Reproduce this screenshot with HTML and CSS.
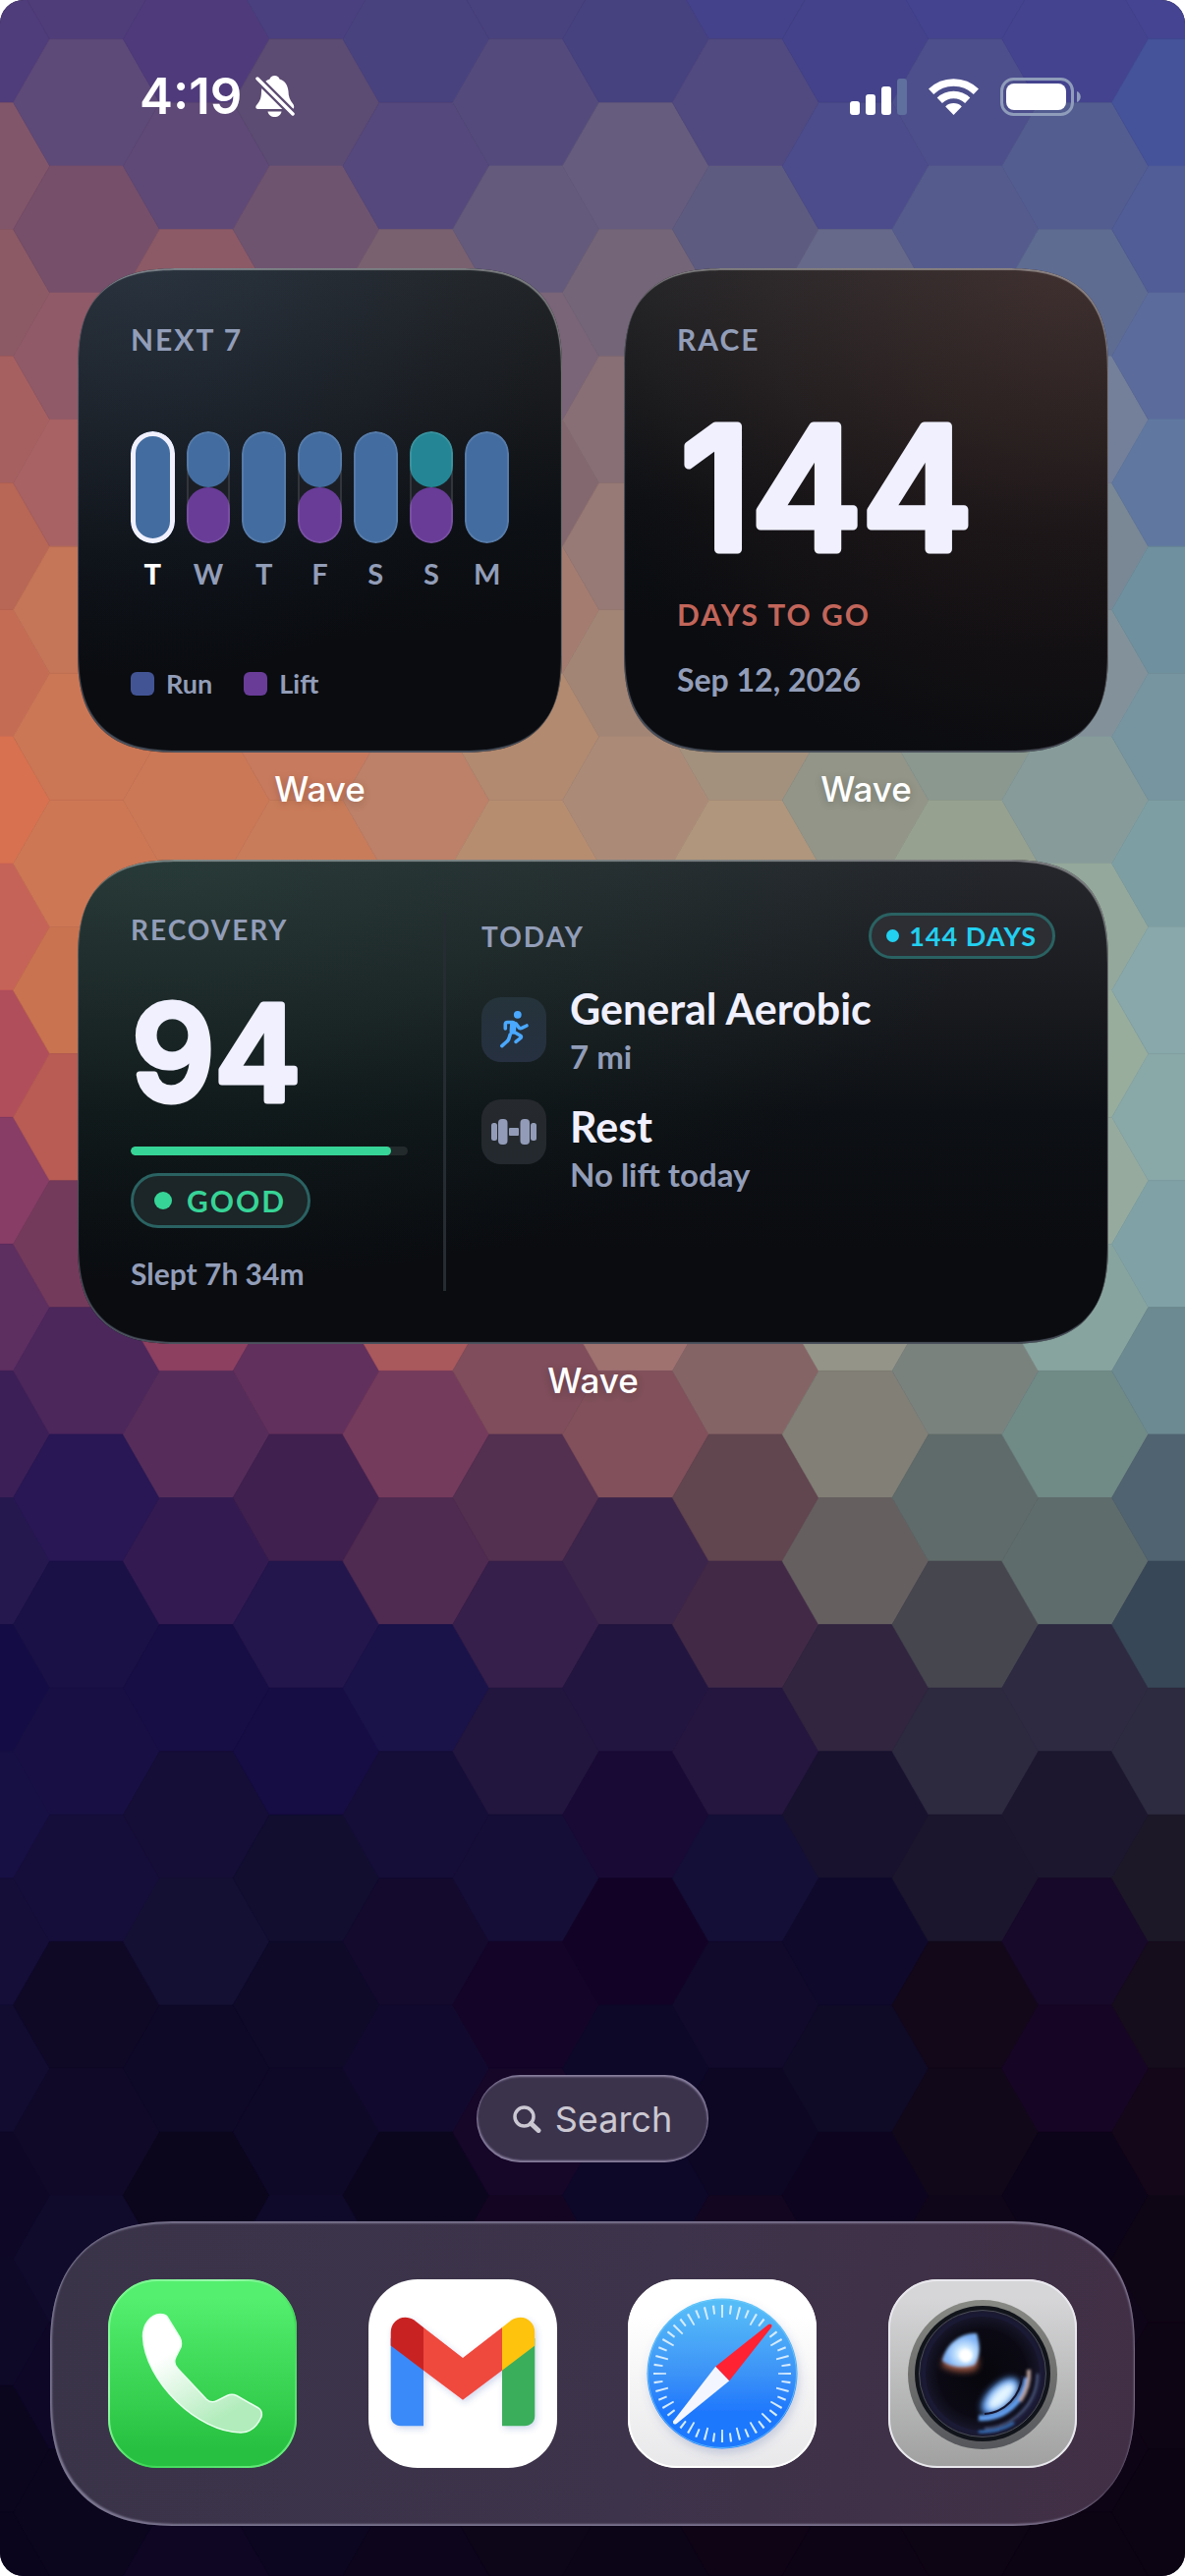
FILE: index.html
```html
<!DOCTYPE html>
<html lang="en">
<head>
<meta charset="utf-8">
<meta name="viewport" content="width=device-width, initial-scale=1">
<title>Home Screen</title>
<link rel="stylesheet" href="styles.css">
</head>
<body>
<main class="screen">
  <svg class="wallpaper" id="wallpaper" viewBox="0 0 1206 2622" preserveAspectRatio="xMidYMid slice" aria-hidden="true"></svg>

  <header class="status">
    <div class="status-side">
      <time class="clock">4:19</time>
      <svg class="bell" viewBox="0 0 40 44" role="img" aria-label="Silent mode">
        <defs>
          <mask id="bell-cut">
            <rect width="40" height="44" fill="#fff"/>
            <path d="M0 2 L40 42" stroke="#000" stroke-width="8"/>
          </mask>
        </defs>
        <g fill="#fff" mask="url(#bell-cut)">
          <path d="M19.5 1C22 1 24 2.500 24.500 4.500C30 6 33 11 33.500 17C33.500 22 35 26 38 29.500C40 32 39.500 35 37 35H2.500C0 35-.5 32.500 1.500 30.500C5 26.500 6 23 6 17C6.500 11 9 6 14.500 4.500C15 2.500 17 1 19.500 1Z"/>
        </g>
        <path fill="#fff" d="M12.500 37.500H26.500C26 41 23 43 19.500 43S13 41 12.500 37.500Z"/>
        <path d="M2 4L38 40" stroke="#fff" stroke-width="3.500" stroke-linecap="round"/>
      </svg>
    </div>
    <div class="status-side status-right">
      <svg class="signal" viewBox="0 0 58 37" role="img" aria-label="Signal: three of four bars" fill="#fff">
        <rect x="0" y="23" width="10" height="14" rx="3"/>
        <rect x="16" y="16" width="10" height="21" rx="3"/>
        <rect x="32" y="8" width="10" height="29" rx="3"/>
        <rect x="48" y="0" width="10" height="37" rx="3" fill="#5f6f9e"/>
      </svg>
      <svg class="wifi" viewBox="0 0 51 37" role="img" aria-label="Wi-Fi">
        <g fill="none" stroke="#fff" stroke-width="7.500">
          <path d="M2.600 13.300A33 33 0 0 1 48.400 13.300"/>
          <path d="M11.300 22.300A20.500 20.500 0 0 1 39.700 22.300"/>
        </g>
        <path fill="#fff" d="M25.500 37L17.200 28.400A12 12 0 0 1 33.800 28.400Z"/>
      </svg>
      <svg class="battery" viewBox="0 0 82 39" role="img" aria-label="Battery full">
        <rect x="1.500" y="1.500" width="72" height="36" rx="12" fill="none" stroke="#8f9cba" stroke-width="3"/>
        <rect x="6" y="6" width="61" height="27" rx="8" fill="#fff"/>
        <path d="M78 14C83 15.500 83 23.500 78 25Z" fill="#8f9cba"/>
      </svg>
    </div>
  </header>

  <div class="widgets">
    <figure class="widget">
      <section class="card card-week">
        <h2 class="label">NEXT 7</h2>
        <ol class="days">
          <li class="day today"><span class="pill"><i class="run"></i></span>T</li>
          <li class="day"><span class="pill"><i class="run"></i><i class="lift"></i></span>W</li>
          <li class="day"><span class="pill"><i class="run"></i></span>T</li>
          <li class="day"><span class="pill"><i class="run"></i><i class="lift"></i></span>F</li>
          <li class="day"><span class="pill"><i class="run"></i></span>S</li>
          <li class="day"><span class="pill"><i class="long"></i><i class="lift"></i></span>S</li>
          <li class="day"><span class="pill"><i class="run"></i></span>M</li>
        </ol>
        <ul class="legend">
          <li><i class="key key-run"></i>Run</li>
          <li><i class="key key-lift"></i>Lift</li>
        </ul>
      </section>
      <figcaption class="caption">Wave</figcaption>
    </figure>

    <figure class="widget">
      <section class="card card-race">
        <h2 class="label">RACE</h2>
        <svg class="race-number" viewBox="0 0 385 220"><text class="numeral numeral-xl" x="4" y="172">144</text></svg>
        <p class="race-unit">DAYS TO GO</p>
        <p class="race-date">Sep 12, 2026</p>
      </section>
      <figcaption class="caption">Wave</figcaption>
    </figure>

    <figure class="widget widget-wide">
      <section class="card card-today">
        <div class="recovery">
          <h2 class="label label-small">RECOVERY</h2>
          <svg class="score" viewBox="0 0 282 170"><text class="numeral numeral-l" x="1" y="133">94</text></svg>
          <div class="meter"><span style="width:94%"></span></div>
          <p class="badge badge-good"><i class="dot"></i>GOOD</p>
          <p class="slept">Slept 7h 34m</p>
        </div>
        <div class="plan">
          <div class="plan-head">
            <h2 class="label label-small">TODAY</h2>
            <p class="badge badge-days"><i class="dot"></i>144 DAYS</p>
          </div>
          <div class="item item-run">
            <svg class="tile" viewBox="0 0 66 66" aria-hidden="true">
              <circle cx="36.800" cy="17.800" r="3.900" fill="#4aa8ff"/>
              <g fill="none" stroke="#4aa8ff" stroke-linecap="round" stroke-linejoin="round" stroke-width="3.600">
                <path d="M24.300 32V27.500Q24.300 25.500 26.500 25.500H32"/>
                <path d="M35 27L38.500 31.300Q39.500 32 41 31.400L46 29"/>
                <path d="M32.500 35L39.800 39.300Q40.800 40.300 40 41.300L35 45.300"/>
                <path d="M29.200 38L27.800 42.500Q27.200 44 26 45L20.800 49.600"/>
                <path d="M32.300 27.500L31.800 34.500" stroke-width="6.500"/>
              </g>
            </svg>
            <div><h3 class="title">General Aerobic</h3><p class="sub">7 mi</p></div>
          </div>
          <div class="item item-lift">
            <svg class="tile" viewBox="0 0 66 66" aria-hidden="true" fill="#929cb8">
              <rect x="10" y="24" width="6" height="18" rx="2.500"/>
              <rect x="17" y="20" width="9.500" height="26" rx="4"/>
              <rect x="28" y="29" width="10" height="8" rx="1"/>
              <rect x="39.500" y="20" width="9.500" height="26" rx="4"/>
              <rect x="50" y="24" width="6" height="18" rx="2.500"/>
            </svg>
            <div><h3 class="title">Rest</h3><p class="sub">No lift today</p></div>
          </div>
        </div>
      </section>
      <figcaption class="caption">Wave</figcaption>
    </figure>
  </div>

  <button class="search" type="button">
    <svg class="glass" viewBox="0 0 29 28" aria-hidden="true" fill="none" stroke="#cbc8d2" stroke-linecap="round">
      <circle cx="11.500" cy="11.500" r="9.500" stroke-width="3.500"/>
      <path d="M18.500 18.500L26 25.500" stroke-width="5"/>
    </svg>
    Search
  </button>

  <nav class="dock" aria-label="Dock">
    <a class="app" href="#phone" aria-label="Phone">
      <svg viewBox="0 0 192 192">
        <defs>
          <linearGradient id="ph-bg" x2="0" y2="1"><stop offset=".1" stop-color="#54ef6e"/><stop offset=".9" stop-color="#28c040"/></linearGradient>
          <linearGradient id="ph-edge" x2="1" y2="1"><stop offset="0" stop-color="#6df585"/><stop offset=".3" stop-color="#9bffae"/><stop offset=".6" stop-color="#3ed857"/><stop offset="1" stop-color="#6ff085"/></linearGradient>
          <linearGradient id="ph-fg" x1=".2" x2=".8" y2="1"><stop offset=".25" stop-color="#fff"/><stop offset=".85" stop-color="#b2ecbc"/></linearGradient>
        </defs>
        <rect width="192" height="192" rx="50" fill="url(#ph-bg)"/>
        <rect x="1" y="1" width="190" height="190" rx="49" fill="none" stroke="url(#ph-edge)" stroke-width="2"/>
        <path fill="url(#ph-fg)" stroke="#eafff0" stroke-width="1.500" d="M53 35.500C43 36 35.500 46 35.500 58C37 104 92 156 135 156C146 156 152 149 156 140C157 136 156 133 153 131L131 118.500C127 116.500 124 117 121 118.500L111 123.500C107 125.500 103 125 100 122L71 91C67 87 67 83 69 79L74 69C75 65 74.500 62 73 59L60 38C58 35.500 56 35.500 53 35.500Z"/>
      </svg>
    </a>
    <a class="app" href="#gmail" aria-label="Gmail">
      <svg viewBox="0 0 192 192">
        <defs><filter id="gm-sh" x="-20%" y="-20%" width="150%" height="150%"><feDropShadow dx="2" dy="3" stdDeviation="3" flood-color="#3355aa" flood-opacity=".22"/></filter></defs>
        <rect width="192" height="192" rx="50" fill="#fff"/>
        <g filter="url(#gm-sh)">
          <path fill="#3b8af9" d="M22.700 60V139C22.700 145 27 149.300 33 149.300H56V88Z"/>
          <path fill="#3aae5b" d="M169.300 60V139C169.300 145 165 149.300 159 149.300H136V88Z"/>
          <path fill="#ef4a3e" d="M56 49L96 80L136 49V92.700L96 122.700L56 92.700Z"/>
          <path fill="#c92420" d="M56 92.700L22.700 67.500V54C22.700 41 36 34.500 46.500 41.500L56 49Z"/>
          <path fill="#fdc310" d="M136 92.700L169.300 67.500V54C169.300 41 156 34.500 145.500 41.500L136 49Z"/>
        </g>
      </svg>
    </a>
    <a class="app" href="#safari" aria-label="Safari">
      <svg viewBox="0 0 192 192">
        <defs>
          <linearGradient id="sf-bg" x2="0" y2="1"><stop offset=".2" stop-color="#fff"/><stop offset="1" stop-color="#e8e8ea"/></linearGradient>
          <linearGradient id="sf-dial" x2="0" y2="1"><stop offset=".05" stop-color="#57bcf8"/><stop offset=".5" stop-color="#3c93f7"/><stop offset=".75" stop-color="#1f78fd"/></linearGradient>
          <filter id="sf-sh" x="-20%" y="-20%" width="140%" height="150%"><feDropShadow dx="2" dy="5" stdDeviation="5" flood-color="#5060a0" flood-opacity=".25"/></filter>
        </defs>
        <rect width="192" height="192" rx="50" fill="url(#sf-bg)"/>
        <rect x="1" y="1" width="190" height="190" rx="49" fill="none" stroke="#fff" stroke-width="2"/>
        <circle cx="96" cy="96" r="76.500" fill="url(#sf-dial)" filter="url(#sf-sh)"/>
        <circle cx="96" cy="96" r="75.500" fill="none" stroke="#6fd0fb" stroke-opacity=".7"/>
        <g fill="none" stroke="#d6ebff">
          <circle cx="96" cy="96" r="63.500" stroke-width="13" pathLength="240" stroke-dasharray="1.200 8.800" stroke-dashoffset=".6"/>
          <circle cx="96" cy="96" r="65.500" stroke-width="9" pathLength="240" stroke-dasharray="1.200 8.800" stroke-dashoffset="5.600"/>
        </g>
        <path fill="#f4f6ff" d="M89.300 88.700L103.300 103.300L49.500 147C47 148.500 45 146.500 46.500 144Z"/>
        <path fill="#ff2233" d="M89.300 88.700L103.300 103.300L146 49C147.500 46.500 145.500 44.500 143 46Z"/>
      </svg>
    </a>
    <a class="app" href="#camera" aria-label="Camera">
      <svg viewBox="0 0 192 192">
        <defs>
          <linearGradient id="cm-bg" x2="0" y2="1"><stop offset=".1" stop-color="#d6d6d8"/><stop offset="1" stop-color="#9fa09f"/></linearGradient>
          <linearGradient id="cm-ring" x2="0" y2="1"><stop offset="0" stop-color="#888a85"/><stop offset=".5" stop-color="#6f706e"/><stop offset="1" stop-color="#55565b"/></linearGradient>
          <radialGradient id="cm-lens"><stop offset="0" stop-color="#07060c"/><stop offset=".7" stop-color="#0b0a14"/><stop offset="1" stop-color="#1c1b33"/></radialGradient>
          <radialGradient id="cm-hl" cx=".6" cy=".6"><stop offset=".1" stop-color="#fff"/><stop offset=".4" stop-color="#cfeaff"/><stop offset="1" stop-color="#7eb2f5"/></radialGradient>
          <filter id="cm-b1" x="-30%" y="-30%" width="160%" height="160%"><feGaussianBlur stdDeviation="1.500"/></filter>
          <filter id="cm-b3" x="-30%" y="-30%" width="160%" height="160%"><feGaussianBlur stdDeviation="3"/></filter>
        </defs>
        <rect width="192" height="192" rx="50" fill="url(#cm-bg)"/>
        <rect x="1" y="1" width="190" height="190" rx="49" fill="none" stroke="#e9e8ee" stroke-width="2"/>
        <circle cx="96" cy="97" r="76" fill="url(#cm-ring)"/>
        <circle cx="96" cy="96" r="69" fill="#11141a"/>
        <circle cx="96" cy="96" r="64.500" fill="url(#cm-lens)" stroke="#4b4d56" stroke-width="1"/>
        <circle cx="96" cy="96" r="60" fill="none" stroke="#1b1a35" stroke-width="4"/>
        <g fill="none" filter="url(#cm-b1)">
          <path d="M152 96A56 56 0 0 1 98 152" stroke="#5c6f9c" stroke-width="2"/>
          <path d="M141 100A46 46 0 0 1 92 141" stroke="#5f9bea" stroke-width="6"/>
          <path d="M143 92A48 48 0 0 1 134 124" stroke="#b9a19c" stroke-width="4"/>
          <path d="M92 155A60 60 0 0 0 128 146" stroke="#3f93ee" stroke-width="2"/>
        </g>
        <path d="M54 88Q72 98 90 92Q92 84 92 80L58 78Z" fill="#9a5440" filter="url(#cm-b3)"/>
        <path d="M55 83C58 66 74 54 90 55C94 68 94 78 88 87C78 91 64 90 55 83Z" fill="url(#cm-hl)" filter="url(#cm-b1)"/>
        <circle cx="79" cy="78" r="6.500" fill="#fff" filter="url(#cm-b1)"/>
        <ellipse cx="114" cy="119" rx="24" ry="12" transform="rotate(-44 114 119)" fill="#5d9cf2" filter="url(#cm-b3)"/>
        <ellipse cx="115" cy="119" rx="18" ry="8" transform="rotate(-44 115 119)" fill="#e3f5ff" filter="url(#cm-b3)"/>
        <path d="M136 98A41 41 0 0 1 98 137" fill="none" stroke="#15142e" stroke-width="2"/>
      </svg>
    </a>
  </nav>
</main>
<script src="wallpaper.js"></script>
</body>
</html>
```

FILE: styles.css
```css
* {
  box-sizing: border-box;
  margin: 0;
  padding: 0;
}

:root {
  --ui: Inter, "Liberation Sans", sans-serif;
  --brand: Lato, "Open Sans", sans-serif;
  --muted: #929db8;
  --bright: #f0f0ff;
  --run: #436da0;
  --lift: #693c98;
  --green: #37d497;
}

body {
  background: #fff;
  font-family: var(--ui);
  color: #fff;
}

ol,
ul {
  list-style: none;
}

.screen {
  position: relative;
  isolation: isolate;
  display: flex;
  flex-direction: column;
  min-height: 100vh;
  overflow: hidden;
  border-radius: 24px;
  background: #0d0620;
}

.wallpaper {
  position: absolute;
  inset: 0;
  z-index: -1;
  width: 100%;
  height: 100%;
}

/* Status bar */

.status {
  display: flex;
  justify-content: space-between;
  align-items: center;
  padding: 68px 106px 0 142px;
}

.status-side {
  display: flex;
  align-items: center;
  gap: 14px;
}

.status-right {
  gap: 22px;
}

.clock {
  font-size: 51px;
  font-weight: 600;
  line-height: 60px;
}

.bell {
  width: 40px;
  height: 44px;
}

.signal {
  width: 58px;
  height: 37px;
}

.wifi {
  width: 51px;
  height: 37px;
}

.battery {
  width: 82px;
  height: 39px;
}

/* Widgets */

.widgets {
  display: grid;
  grid-template-columns: 1fr 1fr;
  gap: 51px 63px;
  padding: 145px 78px 0 79px;
}

.widget-wide {
  grid-column: 1 / -1;
}

.card {
  display: flex;
  flex-direction: column;
  height: 493px;
  padding: 54px;
  border-radius: 84px;
  box-shadow:
    inset -1px 2px 1px rgba(255, 255, 255, 0.4),
    inset 1px -2px 1px rgba(200, 215, 240, 0.35);
  font-family: var(--brand);
  font-weight: 700;
}

.card-week {
  background:
    radial-gradient(circle at 15% 0, rgba(60, 100, 150, 0.18), transparent 65%),
    linear-gradient(175deg, #25282b 0, #191b1e 30%, #0d1014 55%, #0a0c10 75%);
}

.card-race {
  background:
    radial-gradient(circle at 90% 0, rgba(150, 75, 60, 0.24), transparent 80%),
    linear-gradient(185deg, #24282c 0, #181b1e 28%, #0c0f13 52%, #0a0c10 75%);
}

.card-today {
  flex-direction: row;
  background:
    radial-gradient(ellipse at 8% 0, rgba(50, 120, 95, 0.24), transparent 62%),
    linear-gradient(180deg, #25272c 0, #181a1e 30%, #0d1014 52%, #0a0c10 80%);
}

.caption {
  margin-top: 16px;
  font-size: 35px;
  font-weight: 500;
  line-height: 42px;
  text-align: center;
  text-shadow: 0 2px 8px rgba(0, 0, 0, 0.2);
}

.label {
  font-size: 30px;
  font-weight: 700;
  line-height: 36px;
  letter-spacing: 2px;
  color: var(--muted);
}

.label-small {
  font-size: 28px;
  line-height: 34px;
}

.numeral {
  font-family: var(--ui);
  fill: var(--bright);
  stroke: var(--bright);
  stroke-linejoin: round;
}

.numeral-xl {
  font-size: 172px;
  font-weight: 500;
  stroke-width: 9px;
}

.numeral-l {
  font-size: 134px;
  font-weight: 500;
  stroke-width: 7px;
}

/* Next seven days */

.days {
  display: grid;
  grid-template-columns: repeat(7, 1fr);
  gap: 12px;
  margin-top: 76px;
}

.day {
  display: flex;
  flex-direction: column;
  align-items: center;
  gap: 13px;
  font-size: 29px;
  line-height: 36px;
  color: var(--muted);
}

.pill {
  position: relative;
  display: flex;
  flex-direction: column;
  width: 100%;
  height: 114px;
  overflow: hidden;
  border-radius: 23px;
  background: #1b1f25;
}

.pill::after {
  content: "";
  position: absolute;
  inset: 0;
  border: 2px solid rgba(255, 255, 255, 0.1);
  border-radius: inherit;
}

.pill i {
  flex: 1;
  border-radius: 23px;
}

.run {
  background: var(--run);
}

.lift {
  background: var(--lift);
}

.long {
  background: #248694;
}

.today {
  color: #fff;
  font-weight: 900;
}

.today .pill::after {
  border: 5px solid var(--bright);
}

.legend {
  display: flex;
  gap: 32px;
  margin-top: auto;
  font-size: 27px;
  line-height: 32px;
  color: var(--muted);
}

.legend li {
  display: flex;
  align-items: center;
  gap: 12px;
}

.key {
  width: 24px;
  height: 24px;
  border-radius: 6px;
}

.key-run {
  background: #435495;
}

.key-lift {
  background: var(--lift);
}

/* Race countdown */

.race-number {
  width: 100%;
  height: 220px;
  margin-top: 24px;
  overflow: visible;
}

.race-unit {
  font-size: 30px;
  line-height: 36px;
  letter-spacing: 2px;
  color: #c2655a;
}

.race-date {
  margin-top: auto;
  font-size: 32px;
  line-height: 40px;
  color: var(--muted);
}

/* Recovery and plan */

.recovery {
  display: flex;
  flex: 0 0 318px;
  flex-direction: column;
  align-items: flex-start;
  padding-right: 36px;
}

.score {
  width: 100%;
  height: 170px;
  margin-top: 24px;
  overflow: visible;
}

.meter {
  align-self: stretch;
  height: 9px;
  margin-top: 10px;
  overflow: hidden;
  border-radius: 5px;
  background: #232a2b;
}

.meter span {
  display: block;
  height: 100%;
  border-radius: 5px;
  background: var(--green);
}

.badge {
  display: flex;
  align-items: center;
  border: 3px solid #2a6262;
  border-radius: 28px;
}

.badge-good {
  gap: 15px;
  height: 56px;
  margin-top: 18px;
  padding: 0 22px 0 21px;
  background: #1c2527;
  font-size: 30px;
  letter-spacing: 2px;
  color: var(--green);
}

.badge-days {
  gap: 10px;
  height: 47px;
  padding: 0 16px 0 15px;
  background: #2c2e34;
  font-size: 27px;
  letter-spacing: 1px;
  color: #22d0f0;
}

.dot {
  width: 18px;
  height: 18px;
  border-radius: 50%;
  background: currentColor;
}

.badge-days .dot {
  width: 13px;
  height: 13px;
}

.slept {
  margin-top: auto;
  font-size: 30px;
  line-height: 36px;
  color: var(--muted);
}

.plan {
  flex: 1;
  padding-left: 36px;
  border-left: 3px solid #252d32;
}

.plan-head {
  display: flex;
  justify-content: space-between;
  align-items: center;
}

.item {
  display: flex;
  align-items: flex-start;
  gap: 24px;
}

.item-run {
  margin-top: 27px;
}

.item-lift {
  margin-top: 20px;
}

.tile {
  width: 66px;
  height: 66px;
  border-radius: 20px;
  background: linear-gradient(#26292e, #23292e);
}

.item-run .tile {
  margin-top: 12px;
  background: linear-gradient(#25333b, #263040);
}

.item-lift .title {
  margin-top: 4px;
}

.title {
  font-size: 43px;
  line-height: 48px;
  color: var(--bright);
}

.sub {
  font-size: 33px;
  line-height: 48px;
  color: var(--muted);
}

/* Search and dock */

.search {
  display: flex;
  align-items: center;
  align-self: center;
  gap: 14px;
  height: 89px;
  margin-top: auto;
  padding: 0 37px;
  border: 0;
  border-radius: 45px;
  background: #3b334c;
  box-shadow:
    inset -1px 2px 2px rgba(190, 180, 215, 0.6),
    inset 1px -2px 2px rgba(190, 180, 215, 0.6);
  color: #cbc8d2;
  font-family: var(--ui);
  font-size: 36px;
}

.glass {
  width: 29px;
  height: 28px;
}

.dock {
  display: flex;
  justify-content: space-between;
  margin: 60px 51px 51px;
  padding: 59px;
  border-radius: 112px;
  background: linear-gradient(100deg, #3a3449, #3d334a 55%, #412f45);
  box-shadow:
    inset -1px 2px 2px rgba(170, 165, 195, 0.6),
    inset 2px -2px 2px rgba(170, 165, 195, 0.6);
}

.app {
  width: 192px;
  height: 192px;
}

.app svg {
  display: block;
  width: 100%;
  height: 100%;
}

/* Continuous corners where the browser can draw them */

@supports (corner-shape: squircle) {
  .card {
    border-radius: 104px;
    corner-shape: superellipse(1.4);
  }

  .dock {
    border-radius: 130px;
    corner-shape: superellipse(1.3);
  }
}
```

FILE: wallpaper.js
```js
// Honeycomb wallpaper: one list per column, top to bottom.
const columns = [
  "4f3c7a 82566a 8c5a65 a76060 b86655 c56c55 d8714f c66358 b14e5b 873d66 5d2e60 3b1f56 25184f 140d45 171045 140e38 110c30 0e0826 0f0928 0b061e 0a051c",
  "4f3d7a 5e4a78 764f6a 905a68 a86263 c57558 cb7756 cd7755 ca7350 b85c54 743a5c 4c275c 281754 1a1146 181044 160e3a 0f0926 100a28 100a2b 0e0726 0b061e",
  "4f3b7b 5f4977 8c5a66 a06262 b96b5a c5735a cb7856 c87b58 b86658 a05058 8d4060 562d5a 331b52 170e45 150e36 141034 0e0926 0c061c 10082a 0e0822 0e0622",
  "4a4080 5c4b72 6f5470 7f5c70 93666a ac7064 c87a5e c97c5a c47858 ac6058 8a4860 62305c 40204f 23164c 160d44 110e30 0e0a28 0f0928 100a2a 0c0620 0d0620",
  "48427f 55487c 7a6170 80666f 93706c a87868 bd8068 c08468 b87464 b0665e a9585c 753b5c 4f2a51 1a134a 150e38 130a2e 120a2e 0b061e 0f0826 0c0620 0c051c",
  "48427e 544b7c 645a7c 7a6478 84686f a57c70 b28a70 b78d70 b08068 a0705f 8f5c5c 7f4d5b 532f50 361f4a 22163e 150e36 140528 160628 140622 100520 0d0518",
  "46417f 665c7e 746678 876f75 977a75 a28575 ab8b78 ac9078 a88a74 a47e70 9f7270 81505a 3c254b 221540 190a35 120326 0e0828 0e0828 100622 0e051c 0c0518",
  "44428a 514a80 5e5b80 706c80 84787e 95867e a4917d b0967c a89078 987c70 907068 856466 61454f 422a47 25163f 140f37 110a2a 0d0724 120620 10051a 0e0416",
  "43428a 4c4c8c 67698a 707486 7c8086 888c86 929588 96998a 949888 949888 949588 817f76 665f60 31253f 18122f 0f0a2b 0f0a26 0d0520 12061c 0f0418 0d0415",
  "43438f 4d4f8c 555c8d 646e90 707c90 7e8a92 8a9890 97a190 94a090 90a090 8a9a90 7a827e 5f6b6a 46464f 2d293f 1b152d 12081a 110819 10061a 0e0416 0d0414",
  "44438f 545d90 5e6c92 74809a 7a8896 83929a 879c9a 94a89c 98ad9c 96ab9e 88a49e 708a86 5f6c6c 2d2a42 1c172f 170929 170525 0c0418 0f0518 0d0415 0c0413",
  "444492 45539a 505d96 5b6c9c 6078a0 6f909e 7795a0 7d9fa3 88a8ab 89a8a8 80a2a6 6c8a91 506370 384757 2d2b3f 1c1828 150c1c 140719 0f0615 0d0414 0c0413"
];

const columnStep = 111.8;
const rowStep = 129.1;
const halfWidth = 74.5;
const halfSide = 37.4;
const wallpaper = document.getElementById("wallpaper");

columns.forEach((column, c) => {
  const x = -23.8 + c * columnStep;
  const firstTop = c % 2 ? -89.3 : -24.7;
  column.split(" ").forEach((color, r) => {
    const top = firstTop + r * rowStep;
    const middle = top + rowStep / 2;
    const bottom = top + rowStep;
    const hex = document.createElementNS("http://www.w3.org/2000/svg", "polygon");
    hex.setAttribute("points", [
      [x - halfSide, top], [x + halfSide, top], [x + halfWidth, middle],
      [x + halfSide, bottom], [x - halfSide, bottom], [x - halfWidth, middle]
    ].join(" "));
    hex.setAttribute("fill", "#" + color);
    hex.setAttribute("stroke", "#" + color);
    hex.setAttribute("stroke-width", "0.6");
    wallpaper.append(hex);
  });
});
```
